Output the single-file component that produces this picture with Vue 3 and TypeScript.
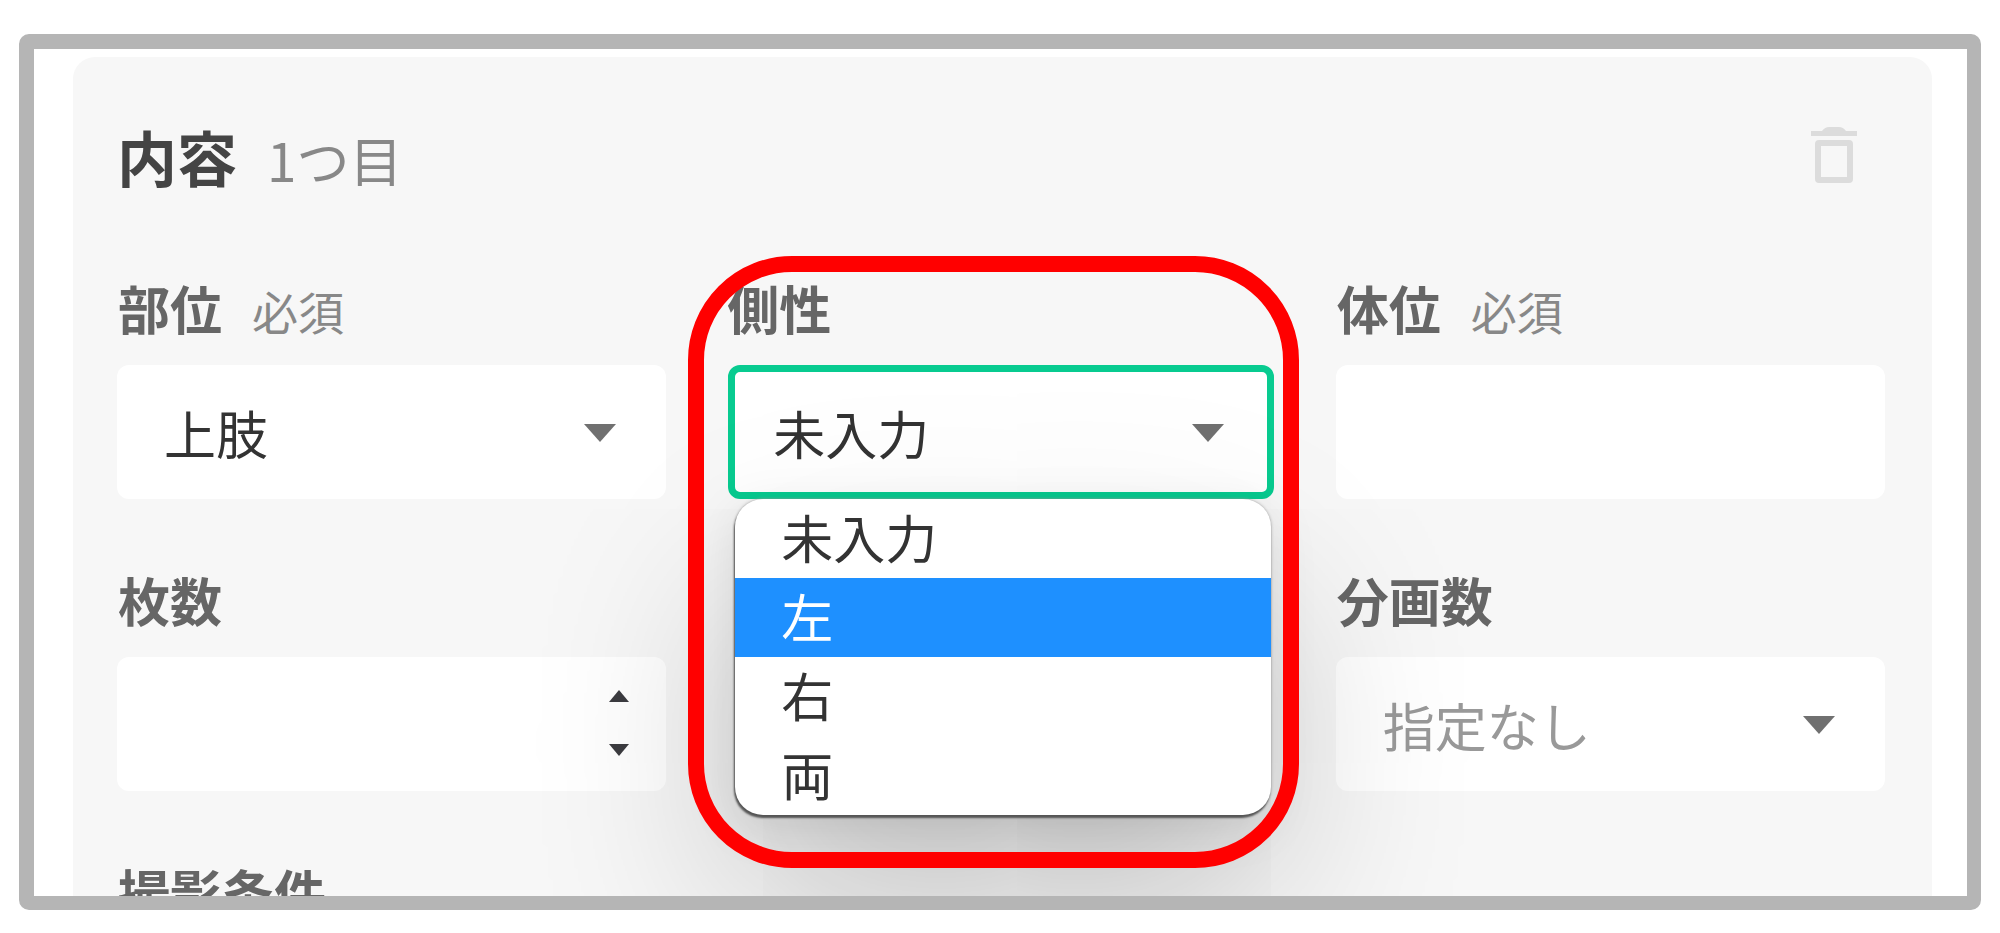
<script setup lang="ts">
import { ref } from 'vue'

const sides: string[] = ['未入力', '左', '右', '両']
const side = ref<string>('未入力')
const active = ref<string>('左')
const part = ref<string>('上肢')
const posture = ref<string>('')
const division = ref<string>('')
const count = ref<number | null>(null)
const condition = ref<string>('')

function step(delta: number): void {
  count.value = Math.max(0, (count.value ?? 0) + delta)
}
</script>

<template>
  <main class="page">
    <div class="frame">
      <section class="panel">
        <header class="head">
          <h2 class="title">内容</h2>
          <span class="order">1つ目</span>
          <button class="trash" type="button" aria-label="削除">
            <svg viewBox="0 0 46 58" width="46" height="58" aria-hidden="true">
              <path d="M0 5H11Q14 1 18 1H28Q32 1 35 5H46V10H0Z" fill="#dcdcdc" />
              <rect x="7" y="17" width="32" height="37" rx="1" fill="none" stroke="#dcdcdc" stroke-width="6" />
            </svg>
          </button>
        </header>

        <form class="fields" @submit.prevent>
          <div class="field">
            <div class="caption">
              <label for="part">部位</label>
              <span class="required">必須</span>
            </div>
            <div class="control">
              <select id="part" v-model="part" class="box">
                <option>上肢</option>
              </select>
              <svg class="caret" viewBox="0 0 32 18" aria-hidden="true"><path d="M0 0H32L16 18Z" /></svg>
            </div>
          </div>

          <div class="field marked">
            <div class="caption">
              <label for="side">側性</label>
            </div>
            <div class="control">
              <select id="side" v-model="side" class="box focused">
                <option v-for="s in sides" :key="s">{{ s }}</option>
              </select>
              <svg class="caret" viewBox="0 0 32 18" aria-hidden="true"><path d="M0 0H32L16 18Z" /></svg>
              <ul class="menu" role="listbox" aria-label="側性">
                <li
                  v-for="s in sides"
                  :key="s"
                  role="option"
                  class="option"
                  :class="{ active: s === active }"
                  :aria-selected="s === side"
                  @mouseenter="active = s"
                  @click="side = s"
                >{{ s }}</li>
              </ul>
            </div>
            <div class="ring"></div>
          </div>

          <div class="field">
            <div class="caption">
              <label for="posture">体位</label>
              <span class="required">必須</span>
            </div>
            <div class="control">
              <input id="posture" v-model="posture" class="box" type="text" />
            </div>
          </div>

          <div class="field">
            <div class="caption">
              <label for="count">枚数</label>
            </div>
            <div class="control">
              <input id="count" v-model="count" class="box" type="number" min="0" />
              <div class="spinner">
                <button type="button" aria-label="増やす" @click="step(1)">
                  <svg viewBox="0 0 20 12" width="20" height="12" aria-hidden="true"><path d="M0 12H20L10 0Z" /></svg>
                </button>
                <button type="button" aria-label="減らす" @click="step(-1)">
                  <svg viewBox="0 0 20 12" width="20" height="12" aria-hidden="true"><path d="M0 0H20L10 12Z" /></svg>
                </button>
              </div>
            </div>
          </div>

          <div class="field last-column">
            <div class="caption">
              <label for="division">分画数</label>
            </div>
            <div class="control">
              <select id="division" v-model="division" class="box placeholder">
                <option value="">指定なし</option>
              </select>
              <svg class="caret" viewBox="0 0 32 18" aria-hidden="true"><path d="M0 0H32L16 18Z" /></svg>
            </div>
          </div>

          <div class="field">
            <div class="caption">
              <label for="condition">撮影条件</label>
            </div>
            <div class="control">
              <input id="condition" v-model="condition" class="box" type="text" />
            </div>
          </div>
        </form>
      </section>
    </div>
  </main>
</template>

<style>
body {
  margin: 0;
  background: #fff;
}
</style>

<style scoped>
.page {
  box-sizing: border-box;
  height: 100vh;
  padding: 34px 19px 23px;
  font-family: "Noto Sans CJK JP", "Noto Sans", sans-serif;
  color: #333;
}

.frame {
  box-sizing: border-box;
  height: 100%;
  padding: 8px 35px 0 39px;
  overflow: hidden;
  border: solid #b5b5b5;
  border-width: 15px 14px 14px 15px;
  border-radius: 10px;
  background: #fff;
}

.panel {
  padding: 67px 47px 40px 44px;
  border-radius: 22px;
  background: #f7f7f7;
}

.head {
  display: flex;
  align-items: baseline;
  height: 64px;
  margin-bottom: 90px;
  line-height: 64px;
}

.title {
  margin: 0;
  font-size: 60px;
  font-weight: 700;
  color: #444;
}

.order {
  margin-left: 30px;
  font-size: 53px;
  color: #888;
}

.trash {
  align-self: flex-start;
  margin: 2px 28px 0 auto;
  padding: 0;
  border: 0;
  background: none;
  line-height: 0;
}

.fields {
  display: grid;
  grid-template-columns: repeat(3, minmax(0, 1fr));
  gap: 71px 60px;
}

.last-column {
  grid-column: 3;
}

.caption {
  display: flex;
  align-items: baseline;
  gap: 30px;
  height: 60px;
  margin-bottom: 27px;
  padding-left: 1px;
  line-height: 60px;
  font-size: 52px;
  font-weight: 700;
  color: #666;
}

.required {
  font-size: 46px;
  font-weight: 400;
  color: #888;
}

.control {
  position: relative;
}

.box {
  display: block;
  box-sizing: border-box;
  width: 100%;
  height: 134px;
  margin: 0;
  padding: 0 80px 0 47px;
  border: 0 solid #08cb90;
  border-radius: 12px;
  outline: 0;
  background: #fff;
  font-family: inherit;
  font-size: 52px;
  color: #333;
  appearance: none;
}

.marked .control {
  margin: 0 2px;
}

.box.focused {
  padding: 0 72px 0 38px;
  border-width: 7px;
}

.box.placeholder {
  color: #999;
}

.box[type="number"] {
  appearance: textfield;
}

.caret {
  position: absolute;
  top: 59px;
  right: 50px;
  width: 32px;
  height: 18px;
  fill: #707070;
  pointer-events: none;
}

.spinner {
  position: absolute;
  top: 33px;
  right: 37px;
  display: flex;
  flex-direction: column;
  gap: 42px;
}

.spinner button {
  padding: 0;
  border: 0;
  background: none;
  line-height: 0;
  fill: #3c3c40;
}

.marked {
  position: relative;
  z-index: 1;
}

.menu {
  position: absolute;
  top: 100%;
  left: 7px;
  right: 3px;
  margin: 0;
  padding: 0;
  overflow: hidden;
  border-radius: 28px;
  background: #fff;
  box-shadow:
    -1px 3px 2px #555,
    0 0 3px #999,
    0 12px 50px rgba(0, 0, 0, 0.1),
    0 90px 200px rgba(0, 0, 0, 0.23);
  list-style: none;
}

.option {
  height: 79px;
  padding-left: 46px;
  line-height: 76px;
  font-size: 52px;
}

.option.active {
  background: #1e90ff;
  color: #fff;
}

.ring {
  position: absolute;
  top: -22px;
  left: -38px;
  right: -23px;
  height: 580px;
  border: 16px solid #f00;
  border-radius: 104px;
  pointer-events: none;
}
</style>
